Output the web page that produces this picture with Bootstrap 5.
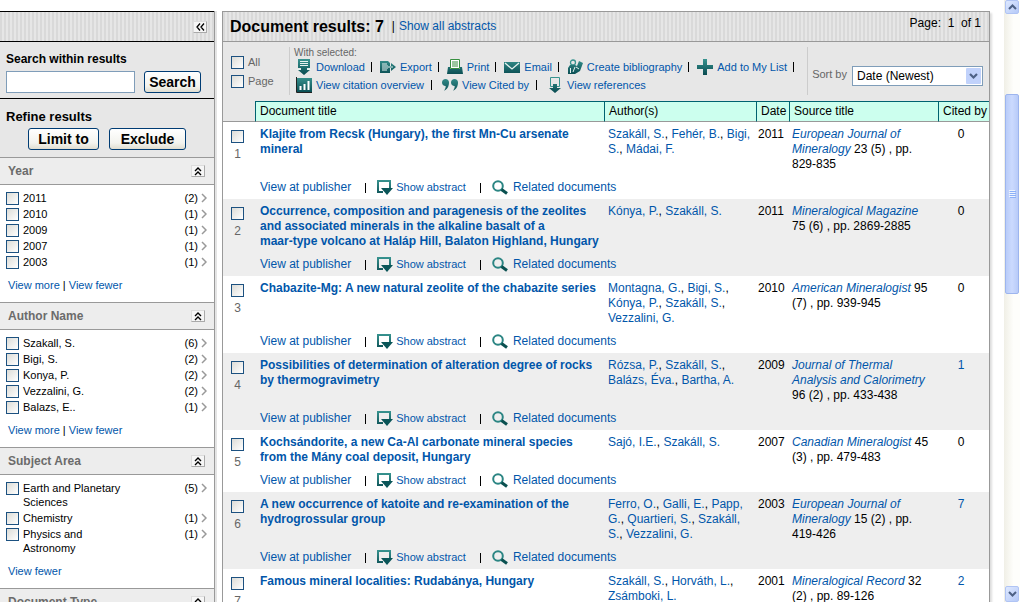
<!DOCTYPE html>
<html lang="en">
<head>
<meta charset="utf-8">
<meta name="viewport" content="width=device-width, initial-scale=1">
<title>Document results</title>
<link href="https://cdn.jsdelivr.net/npm/bootstrap@5.3.0/dist/css/bootstrap.min.css" rel="stylesheet">
<style>
  body { font: 12px/15px "Liberation Sans", Arial, sans-serif; color: #000; background: #fff; }
  a { color: #0156aa; text-decoration: none; }
  a:hover { text-decoration: underline; }
  h1, h2, h3 { margin: 0; font-weight: bold; }
  .striped { background: repeating-linear-gradient(90deg, #d9d9d9 0 2px, #e6e6e6 2px 4px); height: 31px; }
  .tick { appearance: none; width: 13px; height: 13px; margin: 0; border: 1px solid #1c5180; background: linear-gradient(135deg, #dcdcd7, #fff); flex: none; display: block; }
  .dim { color: #666; }

  /* sidebar */
  .side { width: 217px; padding-top: 11px; flex: none; }
  .side-in { border-right: 1px solid #999; box-shadow: 2px 0 0 #e4e4e4; margin-right: 2px; min-height: 100%; }
  .side .striped { border-top: 1px solid #000; border-bottom: 1px solid #000; padding-right: 7px; }
  .panel { background: #e7e7e7; padding: 10px 6px 0; }
  .panel-search { height: 57px; border-bottom: 1px solid #000; }
  .panel-refine { height: 58px; }
  .panel h2 { font-size: 12px; line-height: 15px; }
  .panel-refine h2 { font-size: 13px; }
  .panel-refine .pair { padding-left: 22px; gap: 10px; }
  .field { height: 22px; width: 129px; border: 1px solid #7f9db9; background: #fff; padding: 0 3px; }
  .xp-btn { height: 22px; border: 1px solid #003c74; border-radius: 3px; background: linear-gradient(#fff, #f3f3ee 70%, #e0ddd0); font-weight: bold; font-size: 14px; line-height: 20px; padding: 0; color: #000; }
  .w-search { width: 57px; margin-left: 9px; }
  .w-limit { width: 71px; }
  .w-exclude { width: 77px; }
  .fold { height: 12px; width: 14px; border: 1px solid #aaa; border-left-color: #ddd; border-top-color: #ddd; background: #f6f6f6; padding: 0; display: flex; align-items: center; justify-content: center; }
  .facet-head { height: 28px; background: #ededed; border: solid #999; border-width: 1px 0; padding: 0 9px 0 8px; }
  .facet-head h3 { font-size: 12px; line-height: 15px; color: #6b6b6b; }
  .facet { font-size: 11px; line-height: 14px; padding: 6px 7px 10px 6px; }
  .facet li { padding-bottom: 2px; display: flex; }
  .facet label { flex: 1; padding: 0 60px 0 4px; }
  .facet li svg { width: 6px; height: 10px; margin: 2px 0 0 3px; }
  .facet .tick { margin-top: 1px; }
  .facet .more { margin: 7px 0 0 2px; }

  /* results */
  .results { border: 1px solid #999; border-bottom: 0; box-shadow: 2px 2px 2px #ddd; min-width: 0; margin: 11px 14px 0 5px; }
  .results .striped { height: 30px; border-bottom: 1px solid #999; padding: 0 8px 0 7px; }
  .results h1 { font-size: 16px; line-height: 20px; }
  .tools { background: #e7e7e7; height: 59px; padding: 5px 6px 0 8px; }
  .all-ticks { width: 58px; gap: 6px; padding-top: 9px; font-size: 11px; line-height: 13px; }
  .vline { width: 1px; height: 48px; background: #ccc; flex: none; }
  .hint { font-size: 10px; line-height: 11px; }
  .acts { font-size: 11px; line-height: 18px; height: 18px; display: flex; white-space: nowrap; padding-left: 2px; }
  .acts li { display: flex; align-items: center; }
  .acts li::after { content: ""; width: 1px; height: 10px; background: #000; margin: 0 8px 0 6px; }
  .acts.second li::after { margin: 0 10px 0 7px; }
  .acts.second li:last-child::after { display: none; }
  .acts svg { width: 16px; height: 16px; margin-right: 4px; }
  .sort-label { font-size: 11px; padding: 20px 5px 0 4px; }
  .sort-box { margin-top: 19px; }
  .sorter { width: 131px; height: 20px; border: 1px solid #7f9db9; background: #fff; padding: 0 18px 0 4px; appearance: none; display: block; border-radius: 0; }
  .sort-arrow { position: absolute; right: 2px; top: 2px; pointer-events: none; }
  .docs { table-layout: fixed; width: 100%; border-collapse: separate; border-spacing: 0; }
  .docs th { height: 21px; background: #cfe; border: solid #006270; border-width: 1px 0 1px 1px; border-bottom-color: #999; font-weight: normal; padding: 0 0 0 4px; line-height: 19px; white-space: nowrap; }
  .docs th:first-child { background: #e7e7e7; border-top: 0; border-left: 0; }
  .docs td { vertical-align: top; padding: 5px 0 0 4px; }
  .docs td:first-child { padding: 8px 0 0 8px; }
  .docs tr.doc td.name { padding-left: 5px; font-weight: bold; white-space: nowrap; }
  .docs tr.doc td.cited { text-align: center; padding-right: 9px; }
  .docs tr.doc td:nth-child(4) { padding-left: 2px; }
  .docs tr.doc td:nth-child(5) { padding-left: 3px; }
  .docs tr.links td { padding: 8px 0 4px 5px; height: 27px; }
  .docs tbody:nth-of-type(even) { background: #eee; }
  .num { color: #666; width: 13px; text-align: center; margin-top: 4px; }
  .links div { display: flex; align-items: center; height: 15px; }
  .links i { width: 1px; height: 10px; background: #000; margin: 0 11px 0 14px; }
  .links a.abs { font-size: 11px; margin-left: 3px; }
  .links a.rel { margin-left: 5px; }

  /* window scroll bar */
  .bar { width: 16px; flex: none; background: linear-gradient(90deg, #f0efe6, #fefefb 60%); padding: 0 1px; }
  .bar .cap { height: 16px; border: 1px solid #b0c4f4; border-radius: 2px; background: linear-gradient(135deg, #dde8ff, #b6caf8); display: flex; align-items: center; justify-content: center; flex: none; }
  .bar .cap.up { height: 14px; }
  .thumb { height: 33.3%; margin-top: 80px; border: 1px solid #9db5ee; border-radius: 2px; background: linear-gradient(90deg, #b9ccf9, #cbdafe 50%, #b8cbf8); display: flex; align-items: center; justify-content: center; }
</style>
</head>
<body class="overflow-hidden">
<svg class="position-absolute" width="0" height="0" aria-hidden="true">
  <defs>
    <linearGradient id="tg" gradientUnits="userSpaceOnUse" x1="0" y1="0" x2="0" y2="16"><stop offset="0" stop-color="#389490"/><stop offset="1" stop-color="#084a50"/></linearGradient>
  </defs>
  <symbol id="laquo" viewBox="0 0 9 8"><path d="M4 0.5 1 4l3 3.5M8 0.5 5 4l3 3.5" fill="none" stroke="#000" stroke-width="1.3"/></symbol>
  <symbol id="fold" viewBox="0 0 8 9"><path d="M1 4 4 1l3 3M1 8l3-3 3 3" fill="none" stroke="#000" stroke-width="1.4"/></symbol>
  <symbol id="chev" viewBox="0 0 6 10"><path d="M1 1l4 4-4 4" fill="none" stroke="#999" stroke-width="1.5"/></symbol>
</svg>

<div class="d-flex vh-100">
  <aside class="side">
    <div class="side-in">
      <div class="striped d-flex align-items-center justify-content-end">
        <button class="fold" aria-label="Collapse panel"><svg width="9" height="8"><use href="#laquo"/></svg></button>
      </div>
      <div class="panel panel-search">
        <h2><label for="within">Search within results</label></h2>
        <div class="d-flex mt-1">
          <input class="field" id="within" type="text">
          <button class="xp-btn w-search">Search</button>
        </div>
      </div>
      <div class="panel panel-refine">
        <h2>Refine results</h2>
        <div class="pair d-flex mt-1">
          <button class="xp-btn w-limit">Limit to</button>
          <button class="xp-btn w-exclude">Exclude</button>
        </div>
      </div>

      <div class="facet-head d-flex align-items-center justify-content-between"><h3>Year</h3><button class="fold" aria-label="Collapse Year"><svg width="8" height="9"><use href="#fold"/></svg></button></div>
      <div class="facet">
        <ul class="list-unstyled mb-0">
          <li><input class="tick" type="checkbox" id="y1"><label for="y1">2011</label><span>(2)</span><svg><use href="#chev"/></svg></li>
          <li><input class="tick" type="checkbox" id="y2"><label for="y2">2010</label><span>(1)</span><svg><use href="#chev"/></svg></li>
          <li><input class="tick" type="checkbox" id="y3"><label for="y3">2009</label><span>(1)</span><svg><use href="#chev"/></svg></li>
          <li><input class="tick" type="checkbox" id="y4"><label for="y4">2007</label><span>(1)</span><svg><use href="#chev"/></svg></li>
          <li><input class="tick" type="checkbox" id="y5"><label for="y5">2003</label><span>(1)</span><svg><use href="#chev"/></svg></li>
        </ul>
        <p class="more"><a href="#">View more</a> | <a href="#">View fewer</a></p>
      </div>

      <div class="facet-head d-flex align-items-center justify-content-between"><h3>Author Name</h3><button class="fold" aria-label="Collapse Author Name"><svg width="8" height="9"><use href="#fold"/></svg></button></div>
      <div class="facet">
        <ul class="list-unstyled mb-0">
          <li><input class="tick" type="checkbox" id="a1"><label for="a1">Szakall, S.</label><span>(6)</span><svg><use href="#chev"/></svg></li>
          <li><input class="tick" type="checkbox" id="a2"><label for="a2">Bigi, S.</label><span>(2)</span><svg><use href="#chev"/></svg></li>
          <li><input class="tick" type="checkbox" id="a3"><label for="a3">Konya, P.</label><span>(2)</span><svg><use href="#chev"/></svg></li>
          <li><input class="tick" type="checkbox" id="a4"><label for="a4">Vezzalini, G.</label><span>(2)</span><svg><use href="#chev"/></svg></li>
          <li><input class="tick" type="checkbox" id="a5"><label for="a5">Balazs, E..</label><span>(1)</span><svg><use href="#chev"/></svg></li>
        </ul>
        <p class="more"><a href="#">View more</a> | <a href="#">View fewer</a></p>
      </div>

      <div class="facet-head d-flex align-items-center justify-content-between"><h3>Subject Area</h3><button class="fold" aria-label="Collapse Subject Area"><svg width="8" height="9"><use href="#fold"/></svg></button></div>
      <div class="facet">
        <ul class="list-unstyled mb-0">
          <li><input class="tick" type="checkbox" id="s1"><label for="s1">Earth and Planetary Sciences</label><span>(5)</span><svg><use href="#chev"/></svg></li>
          <li><input class="tick" type="checkbox" id="s2"><label for="s2">Chemistry</label><span>(1)</span><svg><use href="#chev"/></svg></li>
          <li><input class="tick" type="checkbox" id="s3"><label for="s3">Physics and<br>Astronomy</label><span>(1)</span><svg><use href="#chev"/></svg></li>
        </ul>
        <p class="more"><a href="#">View fewer</a></p>
      </div>

      <div class="facet-head d-flex align-items-center justify-content-between"><h3>Document Type</h3><button class="fold" aria-label="Collapse Document Type"><svg width="8" height="9"><use href="#fold"/></svg></button></div>
    </div>
  </aside>

  <main class="results flex-grow-1">
    <div class="striped d-flex align-items-center">
      <h1>Document results: 7</h1><span class="ms-2 me-1">|</span><a href="#">Show all abstracts</a>
      <span class="ms-auto align-self-start pt-1">Page:&nbsp; 1 &nbsp;of 1</span>
    </div>
    <div class="tools d-flex">
      <div class="all-ticks d-flex flex-column dim">
        <div class="d-flex"><input class="tick" type="checkbox" id="all"><label class="ms-1" for="all">All</label></div>
        <div class="d-flex"><input class="tick" type="checkbox" id="pg"><label class="ms-1" for="pg">Page</label></div>
      </div>
      <div class="vline"></div>
      <div class="ps-1">
        <div class="hint dim">With selected:</div>
        <ul class="acts list-unstyled mb-0">
          <li><svg viewBox="0 0 16 16"><path d="M2 0h12v9h-3v2h3l-6 5-6-5h3V9H2z" fill="url(#tg)"/><path d="M4 2.5h8M4 4.5h8M4 6.5h8M1 10.5h4M11 10.5h4" stroke="#e6f2f0"/></svg><a href="#">Download</a></li>
          <li><svg viewBox="0 0 16 16"><path d="M0 2h8l2 2v3h1V4l5 4-5 4V9h-1v5H0z" fill="url(#tg)"/><path d="M2 5h5M2 7h6M2 9h6M2 11h5M8 8h5" stroke="#e6f2f0"/></svg><a href="#">Export</a></li>
          <li><svg viewBox="0 0 16 16"><path d="M1 8h2v2h10V8h2l1 7H0z" fill="url(#tg)"/><path d="M3.5 9.500V.5h9v9z" fill="#fff" stroke="#389040"/><path d="M5 3h6M5 5h6M5 7h6" stroke="#389040"/></svg><a href="#">Print</a></li>
          <li><svg viewBox="0 0 16 16"><path d="M0 3h16v11H0z" fill="url(#tg)"/><path d="M1 4l7 6 7-6" fill="none" stroke="#e6f2f0" stroke-width="1.3"/></svg><a href="#">Email</a></li>
          <li><svg viewBox="0 0 16 16"><circle cx="6" cy="3.5" r="2.5" fill="none" stroke="#389490" stroke-width="1.3"/><path d="M1 15V9l2-3h5l2 1 2-5 4 2-3 8-5 3z" fill="url(#tg)"/><path d="M3.5 9v5M8 8l-2 5M9 8l3 2" stroke="#e6f2f0"/></svg><a href="#">Create bibliography</a></li>
          <li><svg viewBox="0 0 16 16"><path d="M6 0h4v6h6v4h-6v6H6v-6H0V6h6z" fill="url(#tg)"/></svg><a href="#">Add to My List</a></li>
        </ul>
        <ul class="acts second list-unstyled mb-0">
          <li><svg viewBox="0 0 16 16"><path d="M1 1h15v14H1z" fill="url(#tg)"/><path d="M.5 0v15.500H16" fill="none" stroke="#222"/><path d="M4.500 13V9M8.500 13V7M12.500 13V4" stroke="#fff" stroke-width="2"/></svg><a href="#">View citation overview</a></li>
          <li><svg viewBox="0 0 16 16"><path d="M3.500 2C1.500 2 0 3.500 0 5.500S1.500 9 3.500 9C4 9 3.500 12 2 13.500c3-.5 5-4 5-8C7 3.500 5.500 2 3.500 2zM12.500 2c-2 0-3.500 1.500-3.500 3.500S10.500 9 12.500 9c.5 0 0 3-1.500 4.500 3-.5 5-4 5-8C16 3.500 14.500 2 12.500 2z" fill="url(#tg)"/></svg><a href="#">View Cited by</a></li>
          <li><svg viewBox="0 0 16 16"><path d="M3.500.5h9v9h-9z" fill="none" stroke="#389490"/><path d="M6 7h4v4h4l-6 5-6-5h4z" fill="url(#tg)"/></svg><a href="#">View references</a></li>
        </ul>
      </div>
      <div class="d-flex ms-auto">
        <div class="vline"></div>
        <label class="sort-label dim" for="sort">Sort by</label>
        <div class="sort-box position-relative">
          <select class="sorter" id="sort"><option>Date (Newest)</option></select>
          <svg class="sort-arrow" width="15" height="16" viewBox="0 0 15 16"><rect width="15" height="16" rx="1" fill="#c1d2fb"/><path d="M4 6l3.500 3.500L11 6" fill="none" stroke="#4d6185" stroke-width="2.200"/></svg>
        </div>
      </div>
    </div>

    <table class="docs">
      <colgroup><col style="width:32px"><col><col style="width:152px"><col style="width:33px"><col style="width:149px"><col style="width:51px"></colgroup>
      <thead><tr><th></th><th scope="col">Document title</th><th scope="col">Author(s)</th><th scope="col">Date</th><th scope="col">Source title</th><th scope="col">Cited by</th></tr></thead>
    </table>
  </main>

  <div class="bar d-flex flex-column" aria-hidden="true">
    <div class="cap up"><svg width="9" height="6" viewBox="0 0 9 6"><path d="M1 5l3.500-3.500L8 5" fill="none" stroke="#4d6185" stroke-width="2"/></svg></div>
    <div class="thumb"><svg width="7" height="8"><path d="M0 .5h6M0 2.500h6M0 4.500h6M0 6.500h6" stroke="#eef4fe"/><path d="M1 1.500h6M1 3.500h6M1 5.500h6M1 7.500h6" stroke="#8cb0f8"/></svg></div>
    <div class="cap mt-auto"><svg width="9" height="6" viewBox="0 0 9 6"><path d="M1 1l3.500 3.500L8 1" fill="none" stroke="#4d6185" stroke-width="2"/></svg></div>
  </div>
</div>

<script>
  // Each record: title lines, authors, year, journal, rest of the source, citations
  const records = [
    ["Klajite from Recsk (Hungary), the first Mn-Cu arsenate|mineral", "Szakáll, S.;Fehér, B.;Bigi,|S.;Mádai, F.", 2011, "European Journal of|Mineralogy", " 23 (5) , pp.|829-835", 0],
    ["Occurrence, composition and paragenesis of the zeolites|and associated minerals in the alkaline basalt of a|maar-type volcano at Haláp Hill, Balaton Highland, Hungary", "Kónya, P.;Szakáll, S.", 2011, "Mineralogical Magazine", "|75 (6) , pp. 2869-2885", 0],
    ["Chabazite-Mg: A new natural zeolite of the chabazite series", "Montagna, G.;Bigi, S.;|Kónya, P.;Szakáll, S.;|Vezzalini, G.", 2010, "American Mineralogist", " 95|(7) , pp. 939-945", 0],
    ["Possibilities of determination of alteration degree of rocks|by thermogravimetry", "Rózsa, P.;Szakáll, S.;|Balázs, Éva.;Bartha, A.", 2009, "Journal of Thermal|Analysis and Calorimetry", "|96 (2) , pp. 433-438", 1],
    ["Kochsándorite, a new Ca-Al carbonate mineral species|from the Mány coal deposit, Hungary", "Sajó, I.E.;Szakáll, S.", 2007, "Canadian Mineralogist", " 45|(3) , pp. 479-483", 0],
    ["A new occurrence of katoite and re-examination of the|hydrogrossular group", "Ferro, O.;Galli, E.;Papp,|G.;Quartieri, S.;Szakáll,|S.;Vezzalini, G.", 2003, "European Journal of|Mineralogy", " 15 (2) , pp.|419-426", 7],
    ["Famous mineral localities: Rudabánya, Hungary", "Szakáll, S.;Horváth, L.;|Zsámboki, L.", 2001, "Mineralogical Record", " 32|(2) , pp. 89-126", 2]
  ];
  const br = s => s.replaceAll("|", "<br>");
  const people = s => s.split(";").map(a => (a[0] === "|" ? "<br>" : "") + `<a href="#">${br(a.replace(/^\|/, ""))}</a>`).join(", ");
  const table = document.querySelector(".docs");
  records.forEach(([title, authors, year, journal, rest, cited], i) => {
    const body = document.createElement("tbody");
    body.innerHTML = `
      <tr class="doc">
        <td rowspan="2"><input class="tick" type="checkbox" id="d${i}"><label class="num d-block" for="d${i}">${i + 1}</label></td>
        <td class="name"><a href="#">${br(title)}</a></td>
        <td class="text-nowrap">${people(authors)}</td>
        <td>${year}</td>
        <td class="text-nowrap"><a href="#"><em>${br(journal)}</em></a>${br(rest)}</td>
        <td class="cited">${cited ? `<a href="#">${cited}</a>` : cited}</td>
      </tr>
      <tr class="links"><td colspan="5"><div>
        <a href="#">View at publisher</a><i></i>
        <svg width="16" height="16" viewBox="0 0 16 16"><path d="M6 12H1V1h12v8" fill="none" stroke="url(#tg)" stroke-width="2"/><path d="M4 8h12l-6 7z" fill="#0a5558"/></svg><a class="abs" href="#">Show abstract</a><i></i>
        <svg width="16" height="16" viewBox="0 0 16 16"><circle cx="6" cy="6" r="4.800" fill="none" stroke="#2b8583" stroke-width="2"/><path d="M9.500 9.500l5.500 4" stroke="#0a5050" stroke-width="3"/></svg><a class="rel" href="#">Related documents</a>
      </div></td></tr>`;
    table.append(body);
  });
</script>
<script src="https://cdn.jsdelivr.net/npm/bootstrap@5.3.0/dist/js/bootstrap.bundle.min.js"></script>
</body>
</html>
